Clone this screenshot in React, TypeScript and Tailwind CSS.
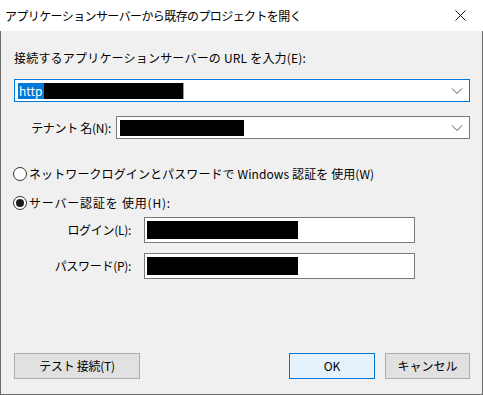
import React from "react";

const font = { fontFamily: '"Noto Sans CJK JP", "Noto Sans", sans-serif' };

function Chevron() {
	return (
		<svg width="12" height="8" viewBox="0 0 12 8" className="shrink-0">
			<path d="M1 1.5 L6 6.5 L11 1.5" fill="none" stroke="#505050" strokeWidth="1" />
		</svg>
	);
}

function Radio({ checked }: { checked?: boolean }) {
	return (
		<svg width="14" height="14" viewBox="0 0 14 14" className="shrink-0">
			<circle cx="7" cy="7" r="6.5" fill="#fff" stroke="#333" strokeWidth="1" />
			{checked && <circle cx="7" cy="7" r="4" fill="#1a1a1a" />}
		</svg>
	);
}

function Redacted({ w, h = 16 }: { w: number; h?: number }) {
	return <span className="inline-block bg-black" style={{ width: w, height: h }} />;
}

export default function App() {
	return (
		<div className="w-[483px] h-[395px] flex flex-col text-[12px] text-black" style={font}>
			{/* title bar */}
			<div className="h-[31px] bg-white flex items-center justify-between">
				<span className="pl-[5px] leading-none tracking-[-0.6px]">
					アプリケーションサーバーから既存のプロジェクトを開く
				</span>
				<div className="w-[46px] h-full flex items-center justify-center">
					<svg width="11" height="11" viewBox="0 0 11 11">
						<path d="M0.5 0.5 L10.5 10.5 M10.5 0.5 L0.5 10.5" stroke="#111" strokeWidth="1" />
					</svg>
				</div>
			</div>

			{/* client */}
			<div className="flex-1 bg-[#f0f0f0] border-x border-b border-[#6b6b6b] flex flex-col">
				<div className="pl-[13px] pr-[12px] pt-[18px]">
					<div className="leading-[17px] tracking-[0.2px]">
						接続するアプリケーションサーバーの&nbsp;URL&nbsp;を入力(E):
					</div>

					{/* url combo */}
					<div className="mt-[13px] h-[23px] bg-white border border-[#0078d7] flex items-center pl-[3px] pr-[6px]">
						<span className="bg-[#0078d7] text-white h-[16px] leading-[16px] px-[1px]">http</span>
						<Redacted w={139} />
						<span className="inline-block w-[1px] h-[16px] bg-[#f08020]" />
						<span className="flex-1" />
						<Chevron />
					</div>

					{/* tenant */}
					<div className="mt-[14px] flex items-center">
						<span className="w-[102px] text-right pr-[5px] tracking-[-0.3px]">テナント 名(N):</span>
						<div className="flex-1 h-[23px] bg-white border border-[#7a7a7a] flex items-center pl-[3px] pr-[6px]">
							<Redacted w={124} />
							<span className="flex-1" />
							<Chevron />
						</div>
					</div>

					{/* radios */}
					<div className="mt-[27px] flex items-center gap-[2px] -ml-[1px] h-[16px]">
						<Radio />
						<span className="tracking-[0.1px]">ネットワークログインとパスワードで Windows 認証を 使用(W)</span>
					</div>
					<div className="mt-[13px] flex items-center gap-[2px] -ml-[1px] h-[16px]">
						<Radio checked />
						<span className="tracking-[0.8px]">サーバー認証を 使用(H):</span>
					</div>

					{/* login */}
					<div className="mt-[6px] flex items-center">
						<span className="w-[117px] text-right tracking-[-0.3px]">ログイン(L):</span>
						<div className="ml-[13px] w-[271px] h-[26px] bg-white border border-[#7a7a7a] flex items-center pl-[2px]">
							<Redacted w={151} h={18} />
						</div>
					</div>
					<div className="mt-[10px] flex items-center">
						<span className="w-[117px] text-right tracking-[-0.3px]">パスワード(P):</span>
						<div className="ml-[13px] w-[271px] h-[26px] bg-white border border-[#7a7a7a] flex items-center pl-[2px]">
							<Redacted w={151} h={18} />
						</div>
					</div>
				</div>

				<div className="flex-1" />

				{/* buttons */}
				<div className="flex items-center pl-[13px] pr-[12px] pb-[15px]">
					<button className="w-[126px] h-[26px] bg-[#e1e1e1] border border-[#adadad] tracking-[-0.3px]">
						テスト 接続(T)
					</button>
					<span className="flex-1" />
					<button className="w-[86px] h-[26px] bg-[#e5f1fb] border border-[#0078d7]">OK</button>
					<button className="ml-[10px] w-[85px] h-[26px] bg-[#e1e1e1] border border-[#adadad]">
						キャンセル
					</button>
				</div>
			</div>
		</div>
	);
}
